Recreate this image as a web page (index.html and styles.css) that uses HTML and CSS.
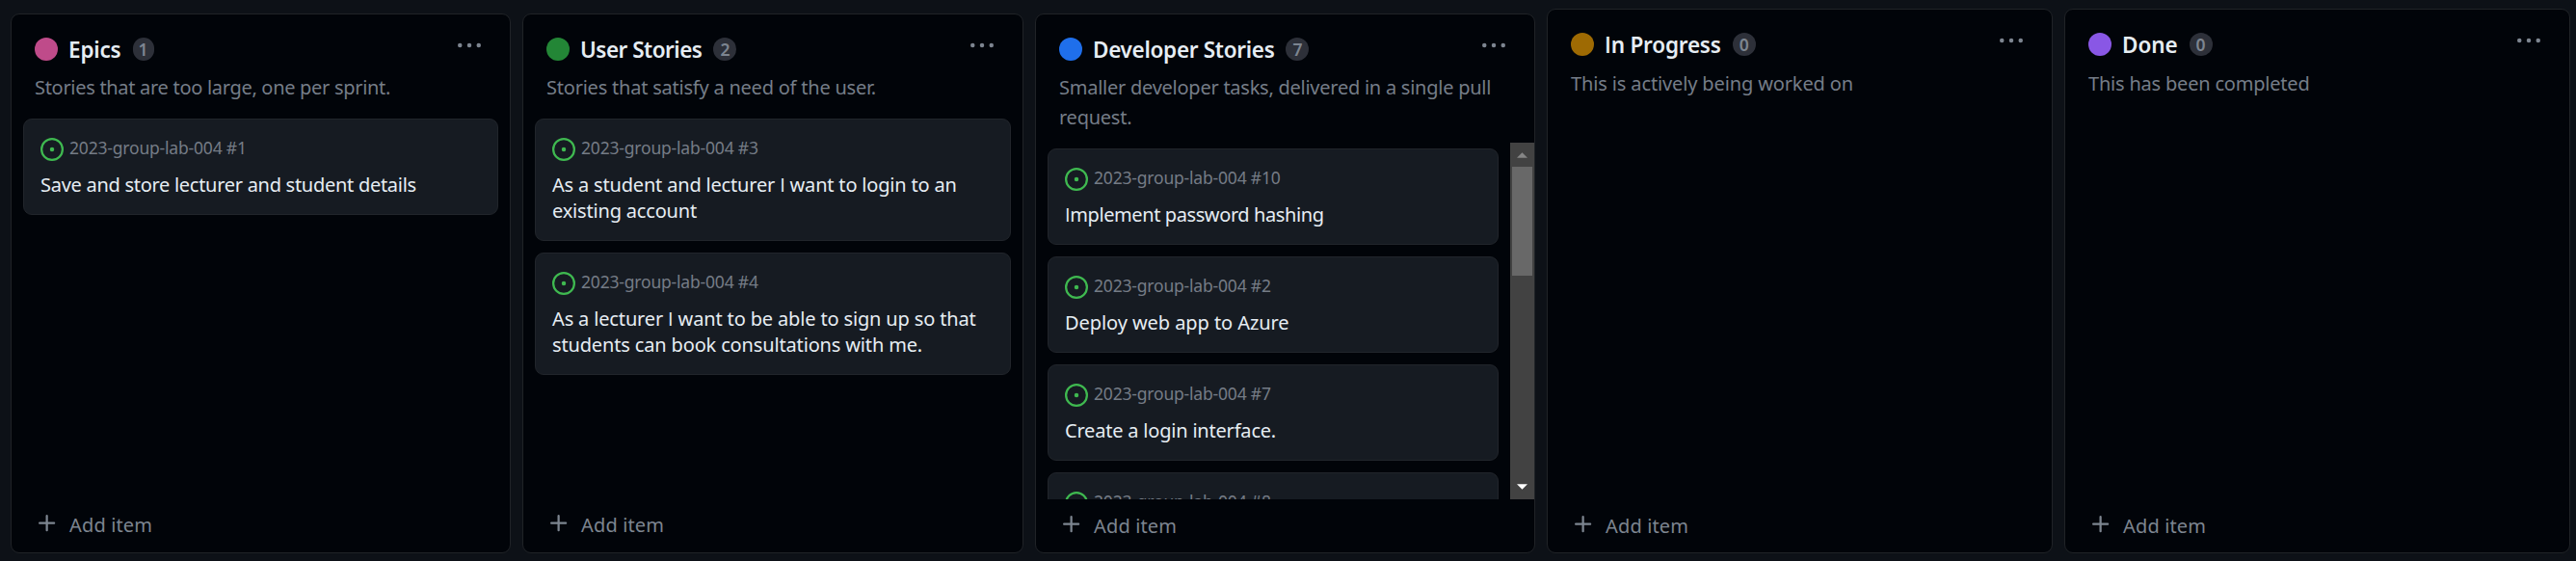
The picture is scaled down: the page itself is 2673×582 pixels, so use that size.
FILE: index.html
```html
<!DOCTYPE html>
<html lang="en">
<head>
<meta charset="utf-8">
<title>Project board</title>
<link rel="stylesheet" href="styles.css">
</head>
<body>
<svg class="defs" aria-hidden="true">
  <symbol id="open" viewBox="0 0 16 16"><path d="M8 9.5a1.5 1.5 0 1 0 0-3 1.5 1.5 0 0 0 0 3Z"/><path d="M8 0a8 8 0 1 1 0 16A8 8 0 0 1 8 0ZM1.5 8a6.5 6.5 0 1 0 13 0 6.5 6.5 0 0 0-13 0Z"/></symbol>
  <symbol id="kebab" viewBox="0 0 16 16"><circle cx="1.5" cy="8" r="1.5"/><circle cx="8" cy="8" r="1.5"/><circle cx="14.5" cy="8" r="1.5"/></symbol>
  <symbol id="plus" viewBox="0 0 16 16"><path d="M7.75 2a.75.75 0 0 1 .75.75V7h4.25a.75.75 0 0 1 0 1.5H8.5v4.25a.75.75 0 0 1-1.5 0V8.5H2.75a.75.75 0 0 1 0-1.5H7V2.75A.75.75 0 0 1 7.75 2Z"/></symbol>
</svg>
<main class="board">
  <section class="column">
    <header class="head">
      <div class="row"><span class="dot pink"></span><h2 class="title ls-18">Epics</h2><span class="count one">1</span><svg class="kebab"><use href="#kebab"/></svg></div>
      <p class="desc ls-30">Stories that are too large, one per sprint.</p>
    </header>
    <div class="body"><div class="list">
      <article class="card"><div class="meta"><svg class="open"><use href="#open"/></svg><span class="repo">2023-group-lab-004 #1</span></div><h3 class="name ls-28">Save and store lecturer and student details</h3></article>
    </div></div>
    <footer class="add"><svg class="plus"><use href="#plus"/></svg><span>Add item</span></footer>
  </section>
  <section class="column user">
    <header class="head">
      <div class="row"><span class="dot green"></span><h2 class="title ls-50">User Stories</h2><span class="count">2</span><svg class="kebab"><use href="#kebab"/></svg></div>
      <p class="desc ls-22">Stories that satisfy a need of the user.</p>
    </header>
    <div class="body"><div class="list">
      <article class="card"><div class="meta"><svg class="open"><use href="#open"/></svg><span class="repo">2023-group-lab-004 #3</span></div><h3 class="name ls-18">As a student and lecturer <span class="cap">I</span> want to login to an<br>existing account</h3></article>
      <article class="card"><div class="meta"><svg class="open"><use href="#open"/></svg><span class="repo">2023-group-lab-004 #4</span></div><h3 class="name ls-15">As a lecturer <span class="cap">I</span> want to be able to sign up so that<br>students can book consultations with me.</h3></article>
    </div></div>
    <footer class="add"><svg class="plus"><use href="#plus"/></svg><span>Add item</span></footer>
  </section>
  <section class="column dev">
    <header class="head">
      <div class="row"><span class="dot blue"></span><h2 class="title ls-30">Developer Stories</h2><span class="count">7</span><svg class="kebab"><use href="#kebab"/></svg></div>
      <p class="desc ls-25">Smaller developer tasks, delivered in a single pull<br>request.</p>
    </header>
    <div class="body"><div class="list">
      <article class="card"><div class="meta"><svg class="open"><use href="#open"/></svg><span class="repo">2023-group-lab-004 #10</span></div><h3 class="name ls-40"><span class="cap">I</span>mplement password hashing</h3></article>
      <article class="card"><div class="meta"><svg class="open"><use href="#open"/></svg><span class="repo">2023-group-lab-004 #2</span></div><h3 class="name ls-7">Deploy web app to Azure</h3></article>
      <article class="card"><div class="meta"><svg class="open"><use href="#open"/></svg><span class="repo">2023-group-lab-004 #7</span></div><h3 class="name ls-20">Create a login interface.</h3></article>
      <article class="card"><div class="meta"><svg class="open"><use href="#open"/></svg><span class="repo">2023-group-lab-004 #8</span></div></article>
    </div>
    <div class="scroll"><svg class="arrow up" viewBox="0 0 12 6"><path d="M6 0l6 6H0z"/></svg><div class="thumb"></div><svg class="arrow down" viewBox="0 0 12 6"><path d="M0 0h12L6 6z"/></svg></div></div>
    <footer class="add"><svg class="plus"><use href="#plus"/></svg><span>Add item</span></footer>
  </section>
  <section class="column wide">
    <header class="head">
      <div class="row"><span class="dot amber"></span><h2 class="title ls-20"><span class="cap">I</span>n Progress</h2><span class="count">0</span><svg class="kebab"><use href="#kebab"/></svg></div>
      <p class="desc ls-13">This is actively being worked on</p>
    </header>
    <div class="body"><div class="list"></div></div>
    <footer class="add"><svg class="plus"><use href="#plus"/></svg><span>Add item</span></footer>
  </section>
  <section class="column wide">
    <header class="head">
      <div class="row"><span class="dot purple"></span><h2 class="title ls-7">Done</h2><span class="count">0</span><svg class="kebab"><use href="#kebab"/></svg></div>
      <p class="desc ls-20">This has been completed</p>
    </header>
    <div class="body"><div class="list"></div></div>
    <footer class="add"><svg class="plus"><use href="#plus"/></svg><span>Add item</span></footer>
  </section>
</main>
</body>
</html>
```
FILE: styles.css
```css
* { box-sizing: border-box; }
body, h2, h3, p { margin: 0; }
body { background: #0d1117; font-family: "Noto Sans", sans-serif; color: #e6edf3; overflow: hidden; }
svg { display: block; flex: none; fill: currentColor; }
.defs { display: none; }
.board { height: 582px; padding: 0 6px 8px 11px; display: flex; gap: 12px; align-items: flex-end; }

.column { width: 519px; height: 560px; flex: none; display: flex; flex-direction: column; background: #010409; border: 1px solid #202327; border-radius: 9px; }
.user { width: 520px; }
.wide { width: 525px; height: 565px; }

.head { padding: 24px 24px 11px; }
.row { display: flex; height: 24px; }
.dot { width: 24px; height: 24px; border-radius: 50%; flex: none; }
.pink { background: #bf4b8a; }
.green { background: #238636; }
.blue { background: #1f6feb; }
.amber { background: #9e6a03; }
.purple { background: #8957e5; }
.title { margin-left: 11px; padding-top: 1px; font-size: 22.5px; line-height: 24px; font-weight: 600; white-space: nowrap; }
.cap { font-family: "Open Sans", sans-serif; }
.count { width: 24px; height: 24px; margin-left: 12px; border-radius: 12px; background: #2d3039; color: #7d8590; font-size: 17.5px; line-height: 24px; font-weight: 600; text-align: center; }
.one { width: 22px; }
.kebab { width: 24px; height: 24px; margin: -4px 6px 0 auto; color: #7d8590; }
.desc { margin-top: 12px; font-size: 20px; line-height: 31px; color: #757d88; white-space: nowrap; }
.wide .desc { margin-top: 13px; }

.body { flex: 1; min-height: 0; display: flex; }
.list { flex: 1; padding: 6px 12px 0; display: flex; flex-direction: column; gap: 12px; overflow: hidden; }
.card { flex: none; padding: 18px 17px 17px; border: 1px solid #21252b; border-radius: 9px; background: #161b22; }
.meta { display: flex; align-items: center; gap: 6px; height: 25px; margin-bottom: 11px; }
.open { width: 24px; height: 24px; color: #3fb950; }
.repo { padding-bottom: 2px; font-size: 17.5px; line-height: 23px; letter-spacing: -.19px; color: #757c86; white-space: nowrap; }
.name { font-size: 20px; line-height: 27px; font-weight: 400; white-space: nowrap; }

.add { height: 55px; flex: none; padding: 0 25px 2px; display: flex; align-items: center; gap: 11px; color: #7d8590; font-size: 20px; line-height: 26px; letter-spacing: .15px; }
.dev .add, .wide .add { padding-bottom: 0; }
.plus { width: 24px; height: 24px; margin-top: -3px; }

.scroll { width: 25px; display: flex; flex-direction: column; align-items: center; background: #424242; }
.arrow { width: 11px; height: 6px; }
.up { margin: 10px 0 9px; color: #868686; }
.thumb { width: 21px; height: 113px; background: #686868; }
.down { margin: auto 0 10px; color: #fff; }

.ls-7 { letter-spacing: -.07px; }
.ls-13 { letter-spacing: -.13px; }
.ls-15 { letter-spacing: -.15px; }
.ls-18 { letter-spacing: -.18px; }
.ls-20 { letter-spacing: -.2px; }
.ls-22 { letter-spacing: -.22px; }
.ls-25 { letter-spacing: -.25px; }
.ls-28 { letter-spacing: -.28px; }
.ls-30 { letter-spacing: -.3px; }
.ls-40 { letter-spacing: -.4px; }
.ls-50 { letter-spacing: -.5px; }
```
